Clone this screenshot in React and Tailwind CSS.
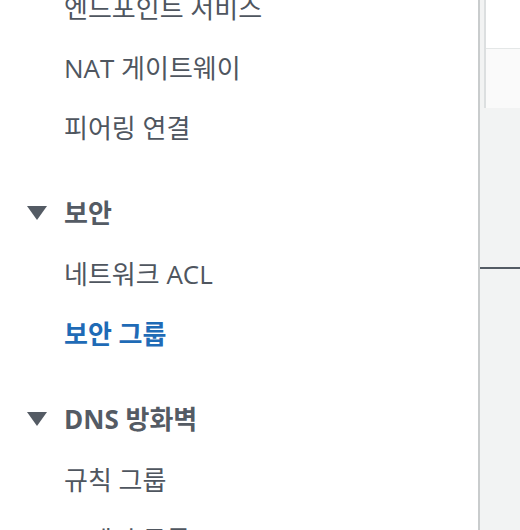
import React from 'react';

const FONT = { fontFamily: '"Open Sans", "Noto Sans CJK KR", sans-serif' };

const sections = [
  { title: null, items: ['엔드포인트 서비스', 'NAT 게이트웨이', '피어링 연결'] },
  { title: '보안', items: ['네트워크 ACL', '보안 그룹'] },
  { title: 'DNS 방화벽', items: ['규칙 그룹', '도메인 목록'] },
];

const ACTIVE = '보안 그룹';

const Caret = () => (
  <svg width="20" height="14" viewBox="0 0 20 14" className="shrink-0">
    <path d="M0 0 H20 L10 14 Z" fill="#545b64" />
  </svg>
);

export default function App() {
  return (
    <div className="flex h-[530px] w-[520px] overflow-hidden bg-white" style={FONT}>
      {/* side nav */}
      <nav className="w-[480px] shrink-0 overflow-hidden border-r-2 border-[#c9cccd]">
        <div className="-mt-[22px]">
          {sections.map((s, i) => (
            <div key={i}>
              {s.title && (
                <div className="mt-[24px] flex h-[62px] items-center gap-[17px] pl-[27px]">
                  <Caret />
                  <span className="text-[26px] font-bold text-[#545b64]">{s.title}</span>
                </div>
              )}
              {s.items.map((it) => (
                <div
                  key={it}
                  className={`flex h-[60px] items-center pl-[64px] text-[26px] ${
                    it === ACTIVE ? 'font-bold text-[#1f6bb6]' : 'text-[#4f565f]'
                  }`}
                >
                  {it}
                </div>
              ))}
            </div>
          ))}
        </div>
      </nav>

      {/* content area */}
      <div className="flex flex-1 flex-col bg-[#f2f3f3]">
        <div className="ml-[4px] flex h-[108px] flex-col border-l-2 border-[#dcdfe0]">
          <div className="h-[48px] bg-white" />
          <div className="flex-1 border-t border-[#e4e7e7] bg-[#fafafa]" />
        </div>
        <div className="mt-[159px] h-[2px] bg-[#545b64]" />
      </div>
    </div>
  );
}
